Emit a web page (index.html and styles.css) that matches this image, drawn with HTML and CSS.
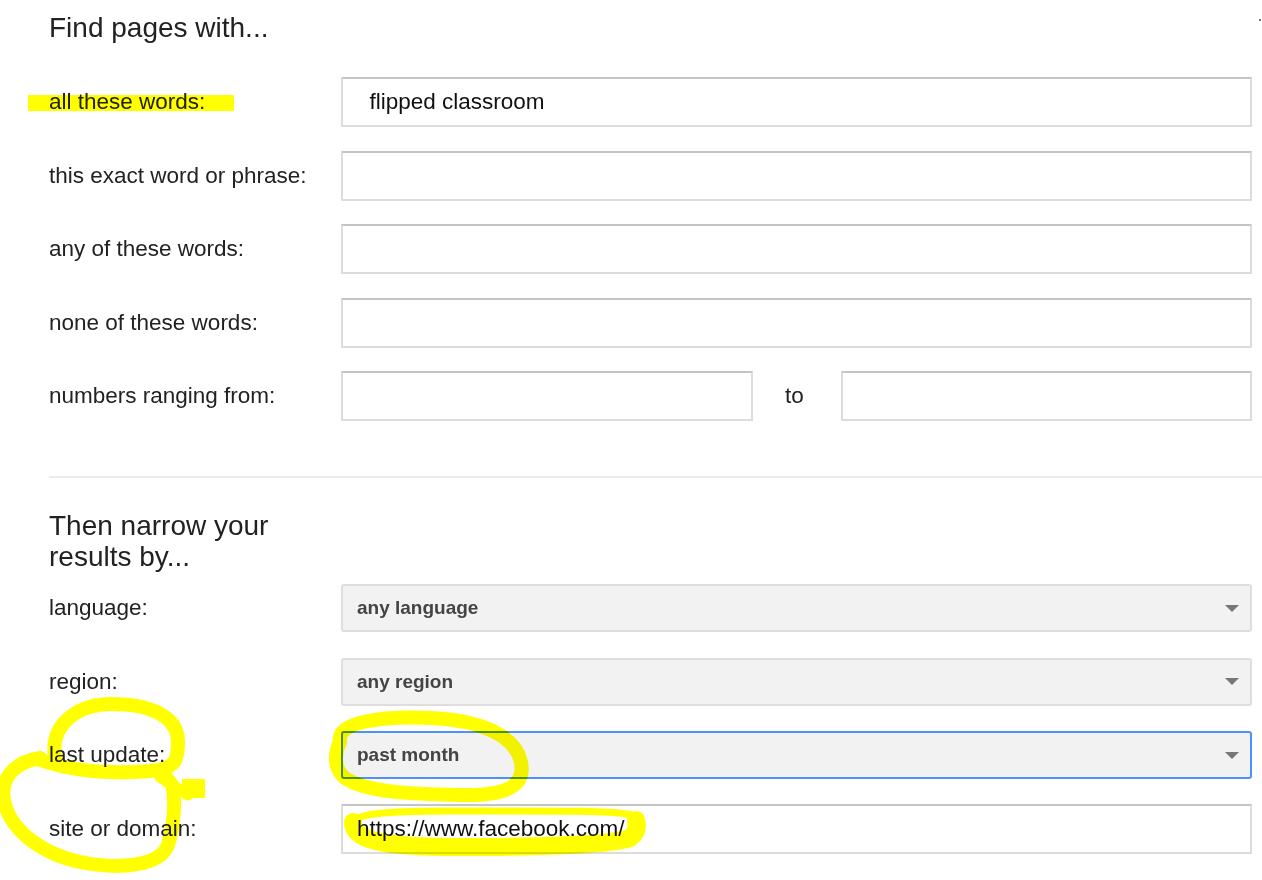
FILE: index.html
```html
<!DOCTYPE html>
<html lang="en">
<head>
    <meta charset="UTF-8">
    <meta name="viewport" content="width=device-width, initial-scale=1.0">
    <title>Advanced Search</title>
    <link rel="stylesheet" href="styles.css">
</head>
<body>
    <span class="corner-dot"></span>

    <div class="page">
        <div class="section">
            <h2 class="section-title">Find pages with...</h2>

            <div class="row">
                <label class="row-label">all these words:</label>
                <div class="row-field"><input type="text" class="text-input" value="  flipped classroom"></div>
            </div>
            <div class="row">
                <label class="row-label">this exact word or phrase:</label>
                <div class="row-field"><input type="text" class="text-input"></div>
            </div>
            <div class="row">
                <label class="row-label">any of these words:</label>
                <div class="row-field"><input type="text" class="text-input"></div>
            </div>
            <div class="row">
                <label class="row-label">none of these words:</label>
                <div class="row-field"><input type="text" class="text-input"></div>
            </div>
            <div class="row">
                <label class="row-label">numbers ranging from:</label>
                <div class="row-field range">
                    <input type="text" class="text-input">
                    <span class="range-to">to</span>
                    <input type="text" class="text-input">
                </div>
            </div>
        </div>

        <div class="divider"></div>

        <div class="section">
            <h2 class="section-title narrow">Then narrow your results by...</h2>

            <div class="row">
                <label class="row-label">language:</label>
                <div class="row-field">
                    <div class="dropdown"><span>any language</span><span class="arrow"></span></div>
                </div>
            </div>
            <div class="row">
                <label class="row-label">region:</label>
                <div class="row-field">
                    <div class="dropdown"><span>any region</span><span class="arrow"></span></div>
                </div>
            </div>
            <div class="row">
                <label class="row-label">last update:</label>
                <div class="row-field">
                    <div class="dropdown focused"><span>past month</span><span class="arrow"></span></div>
                </div>
            </div>
            <div class="row">
                <label class="row-label">site or domain:</label>
                <div class="row-field"><input type="text" class="text-input" value="https://www.facebook.com/"></div>
            </div>
        </div>
    </div>

    <!-- highlighter marks drawn over the screenshot -->
    <svg class="marks" width="1262" height="880" viewBox="0 0 1262 880">
        <rect x="28" y="95" width="206" height="16" fill="#ffff00"/>

        <g fill="none" stroke="#ffff00" stroke-linecap="round" stroke-linejoin="round">
            <path stroke-width="14" d="M 55 757 C 50 722, 80 704, 112 704 C 150 704, 178 716, 178 742 C 178 760, 176 769, 150 771 C 115 774, 75 772, 40 760"/>
            <path stroke-width="14" d="M 40 758 C 15 762, 0 778, 4 800 C 8 825, 35 852, 80 862 C 120 870, 160 866, 168 845 C 174 825, 176 800, 172 785 C 168 778, 162 774, 158 772"/>
            <path stroke-width="11" d="M 160 777 L 188 795"/>

            <path stroke-width="14" d="M 340 742 C 336 722, 380 716, 430 718 C 480 720, 515 735, 521 762 C 526 787, 505 796, 460 795 C 410 794, 365 792, 345 778 C 335 770, 333 756, 340 742"/>

            <path stroke-width="7" d="M 352 826 C 350 814, 380 811, 450 811 C 540 811, 610 810, 632 815 C 640 819, 640 826, 636 832"/>
            <path stroke-width="18" d="M 353 822 C 353 840, 380 847, 460 847 C 540 847, 610 845, 630 838 C 636 834, 638 828, 636 820"/>
        </g>
        <rect x="182" y="779" width="23" height="19" fill="#ffff00"/>
    </svg>
</body>
</html>
```

FILE: styles.css
```css
html {
    height: 100%;
}

body {
    font-family: "Liberation Sans", Arial, sans-serif;
    margin: 0;
    padding: 0;
    min-height: 100%;
    background-color: #ffffff;
    color: #222;
    position: relative;
    overflow: hidden;
}

.corner-dot {
    position: absolute;
    top: 19px;
    right: 1px;
    width: 2px;
    height: 2px;
    background-color: #777;
}

.page {
    padding: 12px 10px 0 49px;
}

.section {
    display: flex;
    flex-direction: column;
    gap: 23.5px;
}

.section-title {
    font-size: 28px;
    font-weight: normal;
    line-height: 32px;
    color: #222;
    margin: 0 0 9.5px 0;
}

.section-title.narrow {
    width: 292px;
    line-height: 31px;
    margin: 32px 0 -12.5px 0;
}

.row {
    display: flex;
    align-items: center;
    height: 50px;
}

.row-label {
    flex: 0 0 292px;
    font-size: 22.5px;
    color: #222;
}

.row-field {
    flex: 1;
    display: flex;
    align-items: center;
}

.row-field.range .text-input {
    flex: 1;
    width: 0;
}

.range-to {
    flex: 0 0 88px;
    text-align: center;
    font-size: 22.5px;
    color: #222;
    padding-right: 4px;
    box-sizing: border-box;
}

.text-input {
    width: 100%;
    height: 50px;
    box-sizing: border-box;
    border: 2px solid #dcdcdc;
    border-top-color: #c4c4c4;
    border-radius: 1px;
    padding: 0 14px;
    font-family: "Liberation Sans", Arial, sans-serif;
    font-size: 22.5px;
    color: #111;
    background-color: #fff;
    outline: none;
    white-space: pre;
}

.divider {
    height: 2px;
    background-color: #ebebeb;
    margin: 55px -10px 0 0;
}

.dropdown {
    width: 100%;
    height: 48px;
    box-sizing: border-box;
    border: 2px solid #dedede;
    border-radius: 3px;
    background-color: #f2f2f2;
    display: flex;
    align-items: center;
    justify-content: space-between;
    padding: 0 11px 0 14px;
    font-size: 19px;
    font-weight: bold;
    color: #444;
}

.dropdown.focused {
    border-color: #4d90fe;
}

.dropdown .arrow {
    width: 0;
    height: 0;
    border-left: 7px solid transparent;
    border-right: 7px solid transparent;
    border-top: 7px solid #777;
}

.marks {
    position: absolute;
    top: 0;
    left: 0;
    pointer-events: none;
    mix-blend-mode: multiply;
}
```
